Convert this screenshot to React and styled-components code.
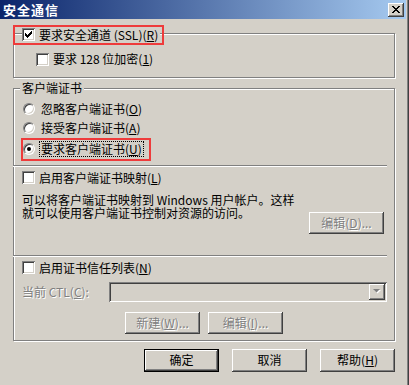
import React from "react";
import styled, { createGlobalStyle } from "styled-components";

const GlobalStyle = createGlobalStyle`
  html, body {
    margin: 0;
    padding: 0;
    background: #d4d0c8;
  }
  body {
    font-family: "Noto Sans CJK SC", "Noto Sans", sans-serif;
    font-size: 12px;
    color: #000;
  }
  * {
    box-sizing: border-box;
  }
`;

const raised = `
  box-shadow: inset -1px -1px #404040, inset 1px 1px #fff,
    inset -2px -2px #808080, inset 2px 2px #d4d0c8;
`;

const sunken = `
  box-shadow: inset 1px 1px #808080, inset -1px -1px #fff,
    inset 2px 2px #404040, inset -2px -2px #d4d0c8;
`;

const Window = styled.div`
  width: 409px;
  height: 385px;
  background: #d4d0c8;
  box-shadow: inset -1px 0 #404040, inset -2px 0 #808080;
  overflow: hidden;
`;

const TitleBar = styled.div`
  display: flex;
  align-items: center;
  justify-content: space-between;
  height: 19px;
  margin-right: 3px;
  padding: 0 2px 0 3px;
  background: linear-gradient(to right, #0a246a, #a6caf0);
`;

const Title = styled.span`
  color: #fff;
  font-weight: 700;
  font-size: 13px;
  letter-spacing: 1px;
  line-height: 19px;
`;

const CloseButton = styled.span`
  display: flex;
  align-items: center;
  justify-content: center;
  width: 16px;
  height: 14px;
  background: #d4d0c8;
  ${raised}
`;

const Content = styled.div`
  padding: 7px 14px 0 13px;
`;

const GroupBox = styled.fieldset`
  margin: ${(p) => p.$top}px 0 0;
  padding: 0;
  min-width: 0;
  border: 1px solid #808080;
  box-shadow: 1px 1px 0 #fff, inset 1px 1px 0 #fff;
`;

const Legend = styled.legend`
  height: 14px;
  margin-left: ${(p) => p.$indent}px;
  padding: ${(p) => (p.$tight ? "0 2px 0 0" : "0 2px")};
  background: #d4d0c8;
  line-height: 14px;
`;

const Highlight = styled.span`
  position: relative;
  display: inline-flex;

  &::after {
    content: "";
    position: absolute;
    top: ${(p) => p.$t}px;
    right: ${(p) => p.$r}px;
    bottom: ${(p) => p.$b}px;
    left: ${(p) => p.$l}px;
    border: 2px solid #ee3b3b;
    pointer-events: none;
  }
`;

const Option = styled.label`
  display: flex;
  align-items: center;
  gap: ${(p) => (p.$radio ? 5 : 4)}px;
  height: ${(p) => (p.$radio ? 19 : 14)}px;
  line-height: 14px;
  white-space: nowrap;
`;

const CheckBox = styled.span`
  display: flex;
  align-items: center;
  justify-content: center;
  flex: none;
  width: 13px;
  height: 13px;
  background: #fff;
  ${sunken}
`;

const Radio = styled.span`
  display: flex;
  align-items: center;
  justify-content: center;
  flex: none;
  width: 12px;
  height: 12px;
  border-radius: 50%;
  border: 1px solid;
  border-color: #808080 #fff #fff #808080;
  background: #fff;
  box-shadow: inset 1px 1px #404040, inset -1px -1px #d4d0c8;

  &::after {
    content: "";
    display: ${(p) => (p.$checked ? "block" : "none")};
    width: 4px;
    height: 4px;
    border-radius: 50%;
    background: #000;
  }
`;

const OptionText = styled.span`
  padding: 0 1px;
  outline: ${(p) => (p.$focus ? "1px dotted #000" : "none")};
`;

const Body = styled.div`
  padding: ${(p) => p.$pad};
`;

const Separator = styled.div`
  height: 2px;
  margin: ${(p) => p.$top}px 7px 0 -1px;
  border-top: 1px solid #808080;
  border-bottom: 1px solid #fff;
`;

const DescRow = styled.div`
  display: flex;
  align-items: flex-start;
  justify-content: space-between;
  margin-top: 8px;
`;

const Description = styled.p`
  margin: 0;
  line-height: 13px;
  white-space: nowrap;
`;

const Button = styled.button`
  flex: none;
  width: 75px;
  height: ${(p) => p.$h || 22}px;
  margin-top: ${(p) => p.$mt || 0}px;
  padding: 0;
  font: inherit;
  line-height: 14px;
  background: #d4d0c8;
  border: ${(p) => (p.$default ? "1px solid #000" : "none")};
  ${raised}
  color: ${(p) => (p.disabled ? "#808080" : "#000")};
  text-shadow: ${(p) => (p.disabled ? "1px 1px 0 #fff" : "none")};
`;

const CtlRow = styled.div`
  display: flex;
  align-items: center;
  margin-top: 7px;
`;

const CtlLabel = styled.span`
  width: 87px;
  flex: none;
  color: #808080;
  text-shadow: 1px 1px 0 #fff;
  white-space: nowrap;
`;

const Combo = styled.div`
  flex: 1;
  display: flex;
  justify-content: flex-end;
  align-items: center;
  height: 20px;
  padding: 2px;
  background: #d4d0c8;
  ${sunken}
`;

const ComboArrow = styled.span`
  display: flex;
  align-items: center;
  justify-content: center;
  width: 16px;
  height: 16px;
  background: #d4d0c8;
  ${raised}
`;

const ButtonRow = styled.div`
  display: flex;
  gap: ${(p) => p.$gap}px;
  justify-content: ${(p) => p.$justify || "flex-start"};
  margin-top: ${(p) => p.$top}px;
  padding-left: ${(p) => p.$left || 0}px;
`;

const Check = () => (
  <svg width="7" height="7" viewBox="0 0 7 7" shapeRendering="crispEdges">
    <path d="M0 2h1v1h1v1h1V3h1V2h1V1h1V0h1v3H6v1H5v1H4v1H3v1H2V6H1V5H0z" fill="#000" />
  </svg>
);

const radios = [
  { label: "忽略客户端证书", key: "O" },
  { label: "接受客户端证书", key: "A" },
  { label: "要求客户端证书", key: "U", checked: true },
];

export default function App() {
  return (
    <>
      <GlobalStyle />
      <Window>
        <TitleBar>
          <Title>安全通信</Title>
          <CloseButton>
            <svg width="8" height="7" viewBox="0 0 8 7" shapeRendering="crispEdges">
              <path
                d="M0 0h2v1h1v1h2V1h1V0h2v1H7v1H6v1H5v1h1v1h1v1h1v1H6V6H5V5H3v1H2v1H0V6h1V5h1V4h1V3H2V2H1V1H0z"
                fill="#000"
              />
            </svg>
          </CloseButton>
        </TitleBar>

        <Content>
          <GroupBox $top={0}>
            <Legend $indent={8} $tight>
              <Highlight $t={-3} $r={-6} $b={-3} $l={-9}>
                <Option>
                  <CheckBox>
                    <Check />
                  </CheckBox>
                  <span>
                    要求安全通道 (SSL)(<u>R</u>)
                  </span>
                </Option>
              </Highlight>
            </Legend>
            <Body $pad="12px 0 11px 22px">
              <Option>
                <CheckBox />
                <span>
                  要求 128 位加密(<u>1</u>)
                </span>
              </Option>
            </Body>
          </GroupBox>

          <GroupBox $top={3}>
            <Legend $indent={6}>客户端证书</Legend>
            <Body $pad="4px 0 0 9px">
              {radios.map(({ label, key, checked }) =>
                checked ? (
                  <Highlight key={key} $t={-2} $r={-8} $b={-2} $l={-2}>
                    <Option $radio>
                      <Radio $checked />
                      <OptionText $focus>
                        {label}(<u>{key}</u>)
                      </OptionText>
                    </Option>
                  </Highlight>
                ) : (
                  <Option key={key} $radio>
                    <Radio />
                    <OptionText>
                      {label}(<u>{key}</u>)
                    </OptionText>
                  </Option>
                )
              )}
            </Body>

            <Separator $top={6} />
            <Body $pad="4px 10px 0 8px">
              <Option>
                <CheckBox />
                <span>
                  启用客户端证书映射(<u>L</u>)
                </span>
              </Option>
              <DescRow>
                <Description>
                  可以将客户端证书映射到 Windows 用户帐户。这样
                  <br />
                  就可以使用客户端证书控制对资源的访问。
                </Description>
                <Button disabled $mt={19}>
                  编辑(<u>D</u>)...
                </Button>
              </DescRow>
            </Body>

            <Separator $top={21} />
            <Body $pad="4px 7px 6px 8px">
              <Option>
                <CheckBox />
                <span>
                  启用证书信任列表(<u>N</u>)
                </span>
              </Option>
              <CtlRow>
                <CtlLabel>
                  当前 CTL(<u>C</u>):
                </CtlLabel>
                <Combo>
                  <ComboArrow>
                    <svg width="8" height="5" viewBox="0 0 8 5">
                      <path d="M1 1h7L4.5 4.5z" fill="#fff" />
                      <path d="M0 0h7L3.5 3.5z" fill="#808080" />
                    </svg>
                  </ComboArrow>
                </Combo>
              </CtlRow>
              <ButtonRow $top={10} $left={103} $gap={8}>
                <Button disabled>
                  新建(<u>W</u>)...
                </Button>
                <Button disabled>
                  编辑(<u>I</u>)...
                </Button>
              </ButtonRow>
            </Body>
          </GroupBox>

          <ButtonRow $top={8} $gap={13} $justify="flex-end">
            <Button $h={23} $default>
              确定
            </Button>
            <Button $h={23}>取消</Button>
            <Button $h={23}>
              帮助(<u>H</u>)
            </Button>
          </ButtonRow>
        </Content>
      </Window>
    </>
  );
}
